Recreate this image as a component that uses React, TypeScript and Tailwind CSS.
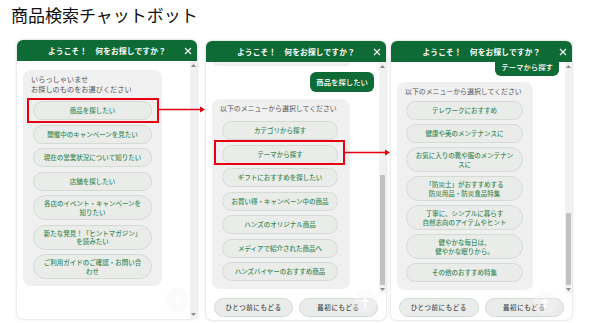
import React from "react";

const GREEN = "bg-[#0e6b35]";

type Item = { label: React.ReactNode; tall?: boolean };

function Header() {
  return (
    <div className={`relative flex h-[21px] shrink-0 items-center justify-center ${GREEN} rounded-t-[6px]`}>
      <span className="text-[7.7px] font-bold leading-none tracking-[0.2px] text-white">
        ようこそ！　何をお探しですか？
      </span>
      <svg className="absolute right-[5px] top-[7px]" width="8" height="8" viewBox="0 0 8 8">
        <path d="M1 1 L7 7 M7 1 L1 7" stroke="white" strokeWidth="1.1" />
      </svg>
    </div>
  );
}

function Scrollbar({ thumbTop, thumbH }: { thumbTop?: string; thumbH?: string }) {
  return (
    <div className="flex w-[7px] shrink-0 flex-col bg-[#f1f1f1]">
      <div className="flex h-[9px] items-center justify-center">
        <svg width="5" height="3" viewBox="0 0 5 3">
          <path d="M0 3 L2.5 0 L5 3 Z" fill="#8a8a8a" />
        </svg>
      </div>
      <div className="flex-1">
        {thumbTop && <div className={`mx-[1px] rounded-[1px] bg-[#c1c1c1] ${thumbTop} ${thumbH}`} />}
      </div>
      <div className="flex h-[9px] items-center justify-center">
        <svg width="5" height="3" viewBox="0 0 5 3">
          <path d="M0 0 L2.5 3 L5 0 Z" fill="#8a8a8a" />
        </svg>
      </div>
    </div>
  );
}

function MenuButton({ item }: { item: Item }) {
  return (
    <div
      className={`flex items-center justify-center whitespace-nowrap rounded-full border border-[#d4dbd5] bg-[#e9ece9] text-center text-[6.5px] font-medium leading-[8.5px] text-[#3c8a58] ${
        item.tall ? "h-[25px]" : "h-[19px]"
      }`}
    >
      <span>{item.label}</span>
    </div>
  );
}

function ScrollTop({ className }: { className: string }) {
  return (
    <div
      className={`absolute flex h-[24px] w-[24px] items-center justify-center rounded-full bg-[#f4f4f4]/40 ${className}`}
    >
      <svg width="10" height="11" viewBox="0 0 10 11">
        <path d="M5 10 V1.5 M1.5 5 L5 1.5 L8.5 5" stroke="white" strokeWidth="1.4" fill="none" />
      </svg>
    </div>
  );
}

function Footer() {
  return (
    <div className="flex h-[27px] shrink-0 gap-[6px] px-[8px] pt-[5px]">
      {["ひとつ前にもどる", "最初にもどる"].map((t) => (
        <div
          key={t}
          className="flex h-[19px] flex-1 items-center justify-center whitespace-nowrap rounded-full border border-[#d4dbd5] bg-[#e9ece9] text-[6.5px] font-medium tracking-[0.6px] text-[#4a4a4a]"
        >
          {t}
        </div>
      ))}
    </div>
  );
}

const menu1: Item[] = [
  { label: "商品を探したい" },
  { label: "開催中のキャンペーンを見たい" },
  { label: "現在の営業状況について知りたい" },
  { label: "店舗を探したい" },
  { label: <>各店のイベント・キャンペーンを<br />知りたい</>, tall: true },
  { label: <>新たな発見！「ヒントマガジン」<br />を読みたい</>, tall: true },
  { label: <>ご利用ガイドのご確認・お問い合<br />わせ</>, tall: true },
];

const menu2: Item[] = [
  { label: "カテゴリから探す" },
  { label: "テーマから探す" },
  { label: "ギフトにおすすめを探したい" },
  { label: "お買い得・キャンペーン中の商品" },
  { label: "ハンズのオリジナル商品" },
  { label: "メディアで紹介された商品へ" },
  { label: "ハンズバイヤーのおすすめ商品" },
];

const menu3: Item[] = [
  { label: "テレワークにおすすめ" },
  { label: "健康や美のメンテナンスに" },
  { label: <>お気に入りの靴や服のメンテナン<br />スに</>, tall: true },
  { label: <>「防災士」がおすすめする<br />防災用品・防災食品特集</>, tall: true },
  { label: <>丁寧に、シンプルに暮らす<br />自然志向のアイテムやヒント</>, tall: true },
  { label: <>健やかな毎日は、<br />健やかな眠りから。</>, tall: true },
  { label: "その他のおすすめ特集" },
];

export default function App() {
  return (
    <div
      className="relative h-[323px] w-[600px] overflow-hidden bg-white"
      style={{ fontFamily: '"Noto Sans CJK JP", "Noto Sans", sans-serif' }}
    >
      <h1 className="pl-[11px] pt-[5px] text-[17px] font-normal leading-[20px] text-[#111]">
        商品検索チャットボット
      </h1>

      <div className="mt-[15px] flex items-start pl-[17px]">
        {/* panel 1 */}
        <div className="relative flex h-[279px] w-[180px] flex-col rounded-[6px] bg-white shadow-[0_0_3px_rgba(0,0,0,0.22)]">
          <Header />
          <div className="flex min-h-0 flex-1">
            <div className="min-w-0 flex-1 overflow-hidden pl-[6px] pt-[9px]">
              <div className="w-[139px] rounded-[8px] bg-[#f0f0f0] px-[8px] pb-[7px] pt-[4.5px]">
                <p className="flex h-[9.5px] items-center text-[7.2px] leading-[8px] text-[#555]">いらっしゃいませ</p>
                <p className="flex h-[9.5px] items-center text-[7.2px] leading-[8px] text-[#555]">お探しのものをお選びください</p>
                <div className="mt-[7.5px] flex flex-col gap-[4.5px] px-[2px]">
                  {menu1.map((m, i) => (
                    <MenuButton key={i} item={m} />
                  ))}
                </div>
              </div>
            </div>
            <Scrollbar />
          </div>
          <ScrollTop className="left-[148px] top-[248px]" />
        </div>

        {/* panel 2 */}
        <div className="relative ml-[9px] mt-[1px] flex h-[279px] w-[180px] flex-col rounded-[6px] bg-white shadow-[0_0_3px_rgba(0,0,0,0.22)]">
          <Header />
          <div className="flex min-h-0 flex-1">
            <div className="flex min-w-0 flex-1 flex-col overflow-hidden">
              <div className="ml-[7px] h-[4px] w-[137px] shrink-0 rounded-b-[8px] bg-[#f0f0f0]" />
              <div className={`mr-[5px] mt-[6px] flex h-[20px] shrink-0 items-center self-end rounded-[6px] px-[6px] text-[7.4px] font-medium leading-[8px] text-white ${GREEN}`}>
                商品を探したい
              </div>
              <div className="ml-[6px] mt-[7px] w-[138px] rounded-[8px] bg-[#f0f0f0] px-[8px] pb-[8px] pt-[5px]">
                <p className="whitespace-nowrap text-[6.9px] leading-[9px] text-[#555]">以下のメニューから選択してください</p>
                <div className="mt-[8px] flex flex-col gap-[4.5px] pl-[2px] pr-[4px]">
                  {menu2.map((m, i) => (
                    <MenuButton key={i} item={m} />
                  ))}
                </div>
              </div>
            </div>
            <Scrollbar thumbTop="mt-[105px]" thumbH="h-[110px]" />
          </div>
          <Footer />
          <ScrollTop className="left-[147px] top-[249px]" />
        </div>

        {/* panel 3 */}
        <div className="relative ml-[5px] mt-[1px] flex h-[279px] w-[181px] flex-col rounded-[6px] bg-white shadow-[0_0_3px_rgba(0,0,0,0.22)]">
          <Header />
          <div className="flex min-h-0 flex-1">
            <div className="flex min-w-0 flex-1 flex-col overflow-hidden">
              <div className={`-mt-[6px] mr-[6px] flex h-[20px] shrink-0 items-center self-end rounded-[6px] px-[6px] pt-[1px] text-[7.4px] font-medium leading-[8px] text-white ${GREEN}`}>
                テーマから探す
              </div>
              <div className="ml-[6px] mt-[6px] w-[136px] rounded-[8px] bg-[#f0f0f0] px-[8px] pb-[8px] pt-[5px]">
                <p className="whitespace-nowrap text-[6.9px] leading-[9px] text-[#555]">以下のメニューから選択してください</p>
                <div className="mt-[5px] flex flex-col gap-[4px] pl-[1px] pr-[2px]">
                  {menu3.map((m, i) => (
                    <MenuButton key={i} item={m} />
                  ))}
                </div>
              </div>
            </div>
            <Scrollbar thumbTop="mt-[143px]" thumbH="h-[72px]" />
          </div>
          <Footer />
          <ScrollTop className="left-[142px] top-[250px]" />
        </div>
      </div>

      {/* annotations */}
      <div className="absolute left-[27px] top-[98px] h-[25px] w-[132px] border-2 border-[#e60012]" />
      <div className="absolute left-[214px] top-[140px] h-[25px] w-[131px] border-2 border-[#e60012]" />
      <svg className="pointer-events-none absolute left-0 top-0" width="600" height="323">
        <line x1="159" y1="109.5" x2="201" y2="109.5" stroke="#e60012" strokeWidth="1.5" />
        <path d="M200 106.5 L205 109.5 L200 112.5 Z" fill="#e60012" />
        <line x1="345" y1="152.5" x2="386" y2="152.5" stroke="#e60012" strokeWidth="1.5" />
        <path d="M385 149.5 L390 152.5 L385 155.5 Z" fill="#e60012" />
      </svg>
    </div>
  );
}
